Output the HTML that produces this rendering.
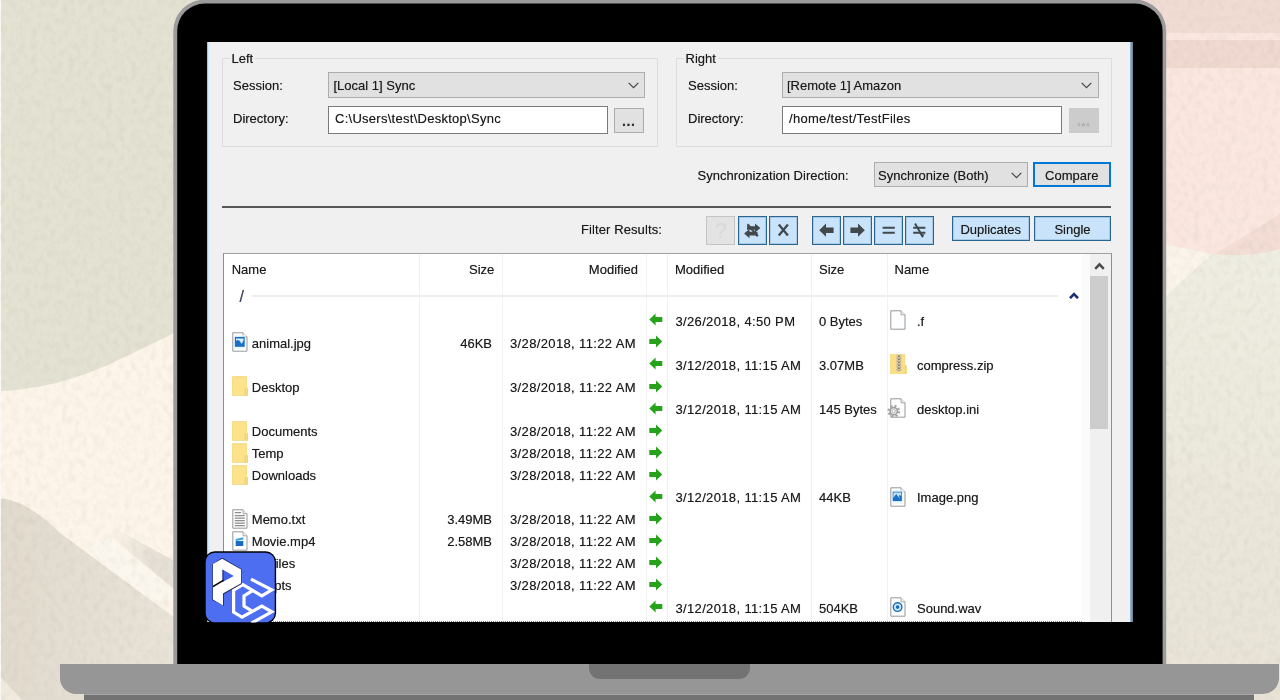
<!DOCTYPE html>
<html lang="en">
<head>
<meta charset="utf-8">
<title>Synchronize</title>
<style>
*{box-sizing:border-box;margin:0;padding:0}
html,body{width:1280px;height:700px;overflow:hidden;background:#e6e3d4}
body{position:relative;font-family:"Liberation Sans",sans-serif;font-size:13px;color:#1b1b1b}
.abs{position:absolute}
#bg{position:absolute;left:0;top:0;width:1280px;height:700px}
#base{position:absolute;left:60px;top:664px;width:1219px;height:30px;background:#969696;border-radius:0 0 16px 16px}
#notch{position:absolute;left:589px;top:664px;width:161px;height:15px;background:#747373;border-radius:0 0 11px 11px}
#foot{position:absolute;left:84px;top:694px;width:1170px;height:8px;background:#747373;border-radius:0 0 0 0;border-top:1px solid #a4a4a4}
#screen{position:absolute;left:207px;top:42px;width:926px;height:580px;background:#f0f0f0;overflow:hidden}
#in{position:absolute;left:-207px;top:-42px;width:1280px;height:700px;will-change:transform}
.t{position:absolute;white-space:pre;line-height:16px;height:16px;text-shadow:0 0 .7px rgba(20,20,20,.55)}
.r{text-align:right}
.fs{position:absolute;border:1px solid #dcdcdc}
.lg{position:absolute;background:#f0f0f0;padding:0 2px;line-height:16px;height:16px;text-shadow:0 0 .7px rgba(20,20,20,.55)}
.sel{position:absolute;background:#e1e1e1;border:1px solid #adadad}
.inp{position:absolute;background:#fff;border:1px solid #7a7a7a}
.btn{position:absolute;background:#e1e1e1;border:1px solid #adadad;text-align:center}
.tb{position:absolute;background:#c9e4fa;border:1px solid #2a668f;box-shadow:inset 0 0 0 1px rgba(60,120,170,.25)}
.tb svg{position:absolute;left:-1px;top:-1px}
.vl{position:absolute;top:254px;width:1px;height:370px;background:#f1f1f1}
svg{display:block}
.ic{position:absolute}
</style>
</head>
<body>
<svg id="bg" viewBox="0 0 1280 700">
  <defs>
    <filter id="pn" x="0" y="0" width="100%" height="100%">
      <feTurbulence type="fractalNoise" baseFrequency="0.16 0.12" numOctaves="3" seed="7" result="n"/>
      <feColorMatrix type="matrix" values="0 0 0 0 0.35  0 0 0 0 0.32  0 0 0 0 0.25  0.55 0.55 0 0 -0.47"/>
    </filter>
    <linearGradient id="gs" x1="0" y1="0" x2="1" y2="0">
      <stop offset="0" stop-color="#e6e0d6" stop-opacity="0"/><stop offset=".6" stop-color="#e6e0d6" stop-opacity="1"/>
    </linearGradient>
    <linearGradient id="gw" gradientUnits="userSpaceOnUse" x1="0" y1="0" x2="180" y2="0">
      <stop offset="0" stop-color="#e1dacd"/><stop offset="1" stop-color="#e9e3d9"/>
    </linearGradient>
    <linearGradient id="gr" x1="0" y1="0" x2="0" y2="1">
      <stop offset="0" stop-color="#efeee2"/><stop offset="1" stop-color="#e8e3d6"/>
    </linearGradient>
  </defs>
  <rect width="1280" height="700" fill="#e4e2d2"/>
  <!-- left: cream + grey wash -->
  <path d="M0,391 C40,390 80,378 114,362 S160,340 180,330 L180,700 L0,700 Z" fill="#fdf5e9"/>
  <path d="M0,498 C22,501 40,513 60,533 L163,609 L180,621 L180,700 L0,700 Z" fill="url(#gw)"/>
  <path d="M118,530 L180,564 L180,594 L110,536 Z" fill="url(#gs)"/>
  <path d="M108,536 L173,589 L163,609 L85,551 Z" fill="#fcf7ee"/>
  <path d="M0,676 L22,700 L0,700 Z" fill="#f1ebdf"/>
  <rect x="0" y="0" width="1" height="700" fill="#fbfaf6"/>
  <!-- right: pink + greenish -->
  <rect x="1100" y="240" width="180" height="460" fill="url(#gr)"/>
  <path d="M1100,0 L1280,0 L1280,249 C1265,253 1240,257 1212,254 L1167,244 L1100,232 Z" fill="#fbe7e0"/>
  <rect x="1100" y="0" width="180" height="33" fill="#f1dcd4"/>
  <rect x="1100" y="40" width="180" height="28" fill="#efd9d0"/>
  <path d="M1280,214 L1280,249 C1262,254 1240,257 1215,254 Z" fill="#f3ddd5"/>
  <path d="M1150,241 L1212,254 L1166,296 L1150,300 Z" fill="#faf4eb"/>
  <rect width="1280" height="700" filter="url(#pn)" opacity="0.3"/>
</svg>
<svg class="abs" style="left:0;top:0" width="1280" height="700" viewBox="0 0 1280 700">
  <path d="M173.3,665 V31 A31.5,31.5 0 0 1 204.8,-0.4 H1134.7 A31.5,31.5 0 0 1 1166.2,31 V665 Z" fill="#9b9b9b"/>
  <path d="M177.2,665 V31 A27.5,27.5 0 0 1 204.7,3.6 H1135 A27.5,27.5 0 0 1 1162.6,31 V665 Z" fill="#000"/>
</svg>
<div id="base"></div>
<div id="notch"></div>
<div id="foot"></div>
<div id="screen"><div id="in">
<div class="abs" style="left:207px;top:42px;width:3px;height:580px;background:linear-gradient(90deg,#7fa3bd 0,#cdeafc 35%,#d6eefd 70%,#ecf3f8 100%)"></div>
<div class="abs" style="left:1128px;top:42px;width:5px;height:580px;background:linear-gradient(90deg,#eaf4fb 0,#e1f1fd 35%,#9fc0d9 45%,#7f9db3 60%,#8099ab 85%,#59646c 100%)"></div>
<div class="fs" style="left:222px;top:58px;width:436px;height:89px"></div>
<div class="fs" style="left:676px;top:58px;width:436px;height:89px"></div>
<div class="lg" style="left:229.5px;top:50.5px">Left</div>
<div class="lg" style="left:683.5px;top:50.5px">Right</div>
<div class="t" style="left:233px;top:77.5px;">Session:</div>
<div class="t" style="left:233px;top:111.0px;">Directory:</div>
<div class="t" style="left:688px;top:77.5px;">Session:</div>
<div class="t" style="left:688px;top:111.0px;">Directory:</div>
<div class="sel" style="left:328px;top:72px;width:317px;height:25.5px"><svg class="abs" style="right:5.5px;top:9px" width="11" height="7" viewBox="0 0 11 7"><path d="M0.7,0.8 L5.5,5.6 L10.3,0.8" fill="none" stroke="#444" stroke-width="1.2"/></svg></div>
<div class="t" style="left:333.5px;top:77.5px;">[Local 1] Sync</div>
<div class="sel" style="left:782px;top:72px;width:316.5px;height:25.5px"><svg class="abs" style="right:5.5px;top:9px" width="11" height="7" viewBox="0 0 11 7"><path d="M0.7,0.8 L5.5,5.6 L10.3,0.8" fill="none" stroke="#444" stroke-width="1.2"/></svg></div>
<div class="t" style="left:787px;top:77.5px;">[Remote 1] Amazon</div>
<div class="inp" style="left:328px;top:106px;width:280px;height:28px"></div>
<div class="t" style="left:335px;top:111.0px;letter-spacing:.27px">C:\Users\test\Desktop\Sync</div>
<div class="inp" style="left:782px;top:106px;width:280px;height:28px"></div>
<div class="t" style="left:789px;top:111.0px;letter-spacing:.3px">/home/test/TestFiles</div>
<div class="btn" style="left:614px;top:108px;width:29.5px;height:25px"></div>
<div class="t" style="left:614px;top:113.0px;width:29.5px;text-align:center;letter-spacing:.6px;font-weight:bold;font-size:14px;color:#333">...</div>
<div class="btn" style="left:1069px;top:108px;width:29.5px;height:25px;background:#cccccc;border-color:#cccccc"></div>
<div class="t" style="left:1069px;top:113.0px;width:29.5px;text-align:center;letter-spacing:.6px;font-weight:bold;font-size:14px;color:#b9b9b9">...</div>
<div class="t" style="left:697.5px;top:168.0px;">Synchronization Direction:</div>
<div class="sel" style="left:874px;top:162px;width:154px;height:25px"><svg class="abs" style="right:5.5px;top:8.5px" width="11" height="7" viewBox="0 0 11 7"><path d="M0.7,0.8 L5.5,5.6 L10.3,0.8" fill="none" stroke="#444" stroke-width="1.2"/></svg></div>
<div class="t" style="left:878px;top:168.0px;">Synchronize (Both)</div>
<div class="btn" style="left:1032.5px;top:161.5px;width:78.5px;height:25.5px;border:2px solid #0078d7"></div>
<div class="t" style="left:1032.5px;top:168.0px;width:78.5px;text-align:center">Compare</div>
<div class="abs" style="left:222px;top:206px;width:889px;height:2px;background:#575757"></div>
<div class="t" style="left:581px;top:221.5px;letter-spacing:.1px">Filter Results:</div>
<div class="tb" style="left:706px;top:216px;width:29px;height:28.5px;background:#e3e3e3;border-color:#c4c4c4;box-shadow:none;"></div>
<div class="t" style="left:706px;top:223.0px;width:29px;text-align:center;color:#d9d9d9;font-size:22px;text-shadow:none;line-height:16px">?</div>
<div class="tb" style="left:738px;top:216px;width:29px;height:28.5px;"><svg width="29" height="28.5" viewBox="0 0 29 28.5"><g fill="#42494d" stroke="none"><path d="M9,10.2 L17,10.2 L17,7.4 L22.4,12 L17,16.6 L17,13.8 L9,13.8 Z"/><path d="M19.5,15.8 L11.5,15.8 L11.5,13 L6.1,17.6 L11.5,22.2 L11.5,19.4 L19.5,19.4 Z"/></g><path d="M9.5,8.2 L19.8,20.2" stroke="#42494d" stroke-width="2.2" fill="none"/></svg></div>
<div class="tb" style="left:769px;top:216px;width:29px;height:28.5px;"><svg width="29" height="28.5" viewBox="0 0 29 28.5"><path d="M9.8,8.6 L18.9,19.4 M18.9,8.6 L9.8,19.4" stroke="#42494d" stroke-width="2.3" fill="none"/></svg></div>
<div class="tb" style="left:811.7px;top:216px;width:29px;height:28.5px;"><svg width="29" height="28.5" viewBox="0 0 29 28.5"><path d="M7.2,14.2 L14,7.6 L14,11.4 L21.6,11.4 L21.6,17 L14,17 L14,20.8 Z" fill="#42494d"/></svg></div>
<div class="tb" style="left:842.5px;top:216px;width:29px;height:28.5px;"><svg width="29" height="28.5" viewBox="0 0 29 28.5"><path d="M21.8,14.2 L15,7.6 L15,11.4 L7.4,11.4 L7.4,17 L15,17 L15,20.8 Z" fill="#42494d"/></svg></div>
<div class="tb" style="left:874.3px;top:216px;width:29px;height:28.5px;"><svg width="29" height="28.5" viewBox="0 0 29 28.5"><path d="M8.6,10.7 h12.2 v2.1 h-12.2 Z M8.6,15.7 h12.2 v2.1 h-12.2 Z" fill="#42494d"/></svg></div>
<div class="tb" style="left:905.2px;top:216px;width:29px;height:28.5px;"><svg width="29" height="28.5" viewBox="0 0 29 28.5"><path d="M8.2,10.7 h12.2 v2.1 h-12.2 Z M8.2,15.7 h12.2 v2.1 h-12.2 Z" fill="#42494d"/><path d="M10,7.6 L17.5,20.4" stroke="#42494d" stroke-width="2" fill="none"/><path d="M15.2,18.2 L19.4,18.2 L17.6,22 Z" fill="#42494d"/></svg></div>
<div class="tb" style="left:951.5px;top:215.8px;width:78.5px;height:25.5px"></div>
<div class="t" style="left:951.5px;top:221.5px;width:78.5px;text-align:center">Duplicates</div>
<div class="tb" style="left:1034px;top:215.8px;width:77px;height:25.5px"></div>
<div class="t" style="left:1034px;top:221.5px;width:77px;text-align:center">Single</div>
<div class="abs" style="left:223px;top:253px;width:889px;height:380px;background:#fff;border:1px solid #8e8e8e;border-top-color:#a0a0a0"></div>
<div class="abs" style="left:1082px;top:254px;width:8px;height:370px;background:#fbfbfb"></div>
<div class="abs" style="left:1090px;top:254px;width:21px;height:370px;background:#f0f0f0"></div>
<div class="abs" style="left:1090px;top:276px;width:18px;height:153px;background:#cdcdcd"></div>
<svg class="abs" style="left:1093.5px;top:262px" width="11" height="8" viewBox="0 0 11 8"><path d="M1.2,6.8 L5.5,2.4 L9.8,6.8" fill="none" stroke="#4a4a4a" stroke-width="2.5"/></svg>
<div class="vl" style="left:418.5px"></div>
<div class="vl" style="left:501.5px"></div>
<div class="vl" style="left:645.5px"></div>
<div class="vl" style="left:667.3px"></div>
<div class="vl" style="left:811px"></div>
<div class="vl" style="left:886.5px"></div>
<div class="t" style="left:231.7px;top:261.5px;">Name</div>
<div class="t r" style="left:440px;top:261.5px;width:54.3px;">Size</div>
<div class="t r" style="left:520px;top:261.5px;width:118px;">Modified</div>
<div class="t" style="left:675px;top:261.5px;">Modified</div>
<div class="t" style="left:819px;top:261.5px;">Size</div>
<div class="t" style="left:894.5px;top:261.5px;">Name</div>
<div class="t" style="left:239.5px;top:289.2px;color:#3e4565;font-size:16px">/</div>
<div class="abs" style="left:252px;top:295px;width:806px;height:2px;background:#eeeeee"></div>
<svg class="abs" style="left:1068.5px;top:292px" width="10" height="7" viewBox="0 0 10 7"><path d="M1,6.2 L5,2.2 L9,6.2" fill="none" stroke="#1c2f72" stroke-width="2.6"/></svg>
<svg class="abs" style="left:649px;top:313.3px" width="14" height="13" viewBox="0 0 14 13"><path d="M0.3,6.5 L6.6,0.4 L6.6,4 L13.3,4 L13.3,9 L6.6,9 L6.6,12.6 Z" fill="#27a31b"/></svg>
<div class="t" style="left:675.4px;top:313.6px;letter-spacing:.36px">3/26/2018, 4:50 PM</div>
<div class="t" style="left:819px;top:313.6px;">0 Bytes</div>
<svg class="ic" style="left:890px;top:310.1px" width="16" height="20" viewBox="0 0 16 20"><path d="M0.8,0.8 H11 L15,4.8 V19.2 H0.8 Z" fill="#fdfeff" stroke="#989898"/><path d="M11,0.8 V4.8 H15" fill="#eef1f4" stroke="#a0a0a0" stroke-width=".9"/></svg>
<div class="t" style="left:917px;top:313.6px;">.f</div>
<svg class="ic" style="left:232.2px;top:332.1px" width="16" height="20" viewBox="0 0 16 20"><path d="M0.8,0.8 H11 L15,4.8 V19.2 H0.8 Z" fill="#fdfeff" stroke="#989898"/><path d="M11,0.8 V4.8 H15" fill="#eef1f4" stroke="#a0a0a0" stroke-width=".9"/><rect x="1.8" y="3" width="12" height="14" fill="#e4f3fd" opacity=".7"/><rect x="2.9" y="4.9" width="9.8" height="9.9" fill="#1a70c6"/><path d="M4,6.4 H11.6 V8.2 L9.6,12 L7.6,8.8 L5.8,8 L4,8.8 Z" fill="#dcedfb"/></svg>
<div class="t" style="left:251.8px;top:335.7px;">animal.jpg</div>
<div class="t r" style="left:430px;top:335.7px;width:62px;">46KB</div>
<div class="t" style="left:510px;top:335.7px;letter-spacing:.36px">3/28/2018, 11:22 AM</div>
<svg class="abs" style="left:649px;top:335.4px" width="14" height="13" viewBox="0 0 14 13"><path d="M13.3,6.5 L7,0.4 L7,4 L0.3,4 L0.3,9 L7,9 L7,12.6 Z" fill="#27a31b"/></svg>
<svg class="abs" style="left:649px;top:357.4px" width="14" height="13" viewBox="0 0 14 13"><path d="M0.3,6.5 L6.6,0.4 L6.6,4 L13.3,4 L13.3,9 L6.6,9 L6.6,12.6 Z" fill="#27a31b"/></svg>
<div class="t" style="left:675.4px;top:357.7px;letter-spacing:.36px">3/12/2018, 11:15 AM</div>
<div class="t" style="left:819px;top:357.7px;">3.07MB</div>
<svg class="ic" style="left:889.7px;top:353.9px" width="17" height="20" viewBox="0 0 17 20"><path d="M0.3,0.6 H14.8 V11.5 H16.4 V19.8 H0.3 Z" fill="#fbdf85" stroke="#f2d576" stroke-width=".7"/><path d="M14.9,11.6 H16.3 V19.6 H14.9 Z" fill="#f0d272"/><rect x="6.3" y="0.6" width="5.2" height="16.8" fill="#d6c8a2"/><path d="M8.9,1.6 V17" stroke="#5d584b" stroke-width="1.3" stroke-dasharray="1.4 1.6"/><path d="M7.3,3.2 V17" stroke="#b5ab8c" stroke-width="1" stroke-dasharray="1.5 1.5"/><path d="M10.5,3.2 V17" stroke="#b5ab8c" stroke-width="1" stroke-dasharray="1.5 1.5"/></svg>
<div class="t" style="left:917px;top:357.7px;">compress.zip</div>
<svg class="ic" style="left:232.2px;top:376.4px" width="16" height="20" viewBox="0 0 16 20"><path d="M0.5,0.6 H14.6 V12.2 H15.9 V19.6 H0.5 Z" fill="#fbe28b" stroke="#f3d77c" stroke-width=".8"/><path d="M13.2,12.4 V19.4" stroke="#e8cb6c" stroke-width=".9"/><path d="M14.7,12.4 H15.8 V19.4 H14.7 Z" fill="#f1d576"/></svg>
<div class="t" style="left:251.8px;top:379.8px;">Desktop</div>
<div class="t" style="left:510px;top:379.8px;letter-spacing:.36px">3/28/2018, 11:22 AM</div>
<svg class="abs" style="left:649px;top:379.5px" width="14" height="13" viewBox="0 0 14 13"><path d="M13.3,6.5 L7,0.4 L7,4 L0.3,4 L0.3,9 L7,9 L7,12.6 Z" fill="#27a31b"/></svg>
<svg class="abs" style="left:649px;top:401.6px" width="14" height="13" viewBox="0 0 14 13"><path d="M0.3,6.5 L6.6,0.4 L6.6,4 L13.3,4 L13.3,9 L6.6,9 L6.6,12.6 Z" fill="#27a31b"/></svg>
<div class="t" style="left:675.4px;top:401.9px;letter-spacing:.36px">3/12/2018, 11:15 AM</div>
<div class="t" style="left:819px;top:401.9px;">145 Bytes</div>
<svg class="ic" style="left:887.2px;top:398.4px" width="19" height="20" viewBox="0 0 19 20"><g transform="translate(3,0)"><path d="M0.8,0.8 H11 L15,4.8 V19.2 H0.8 Z" fill="#fdfeff" stroke="#989898"/><path d="M11,0.8 V4.8 H15" fill="#eef1f4" stroke="#a0a0a0" stroke-width=".9"/></g><circle cx="6.8" cy="13.2" r="5.2" fill="none" stroke="#a9a9a9" stroke-width="2.4" stroke-dasharray="2.1 1.98"/><circle cx="6.8" cy="13.2" r="3.6" fill="#ececec" stroke="#9d9d9d" stroke-width="1.5"/><circle cx="6.8" cy="13.2" r="1.7" fill="#fff" stroke="#a5a5a5" stroke-width=".8"/></svg>
<div class="t" style="left:917px;top:401.9px;">desktop.ini</div>
<svg class="ic" style="left:232.2px;top:420.6px" width="16" height="20" viewBox="0 0 16 20"><path d="M0.5,0.6 H14.6 V12.2 H15.9 V19.6 H0.5 Z" fill="#fbe28b" stroke="#f3d77c" stroke-width=".8"/><path d="M13.2,12.4 V19.4" stroke="#e8cb6c" stroke-width=".9"/><path d="M14.7,12.4 H15.8 V19.4 H14.7 Z" fill="#f1d576"/></svg>
<div class="t" style="left:251.8px;top:424.0px;">Documents</div>
<div class="t" style="left:510px;top:424.0px;letter-spacing:.36px">3/28/2018, 11:22 AM</div>
<svg class="abs" style="left:649px;top:423.7px" width="14" height="13" viewBox="0 0 14 13"><path d="M13.3,6.5 L7,0.4 L7,4 L0.3,4 L0.3,9 L7,9 L7,12.6 Z" fill="#27a31b"/></svg>
<svg class="ic" style="left:232.2px;top:442.6px" width="16" height="20" viewBox="0 0 16 20"><path d="M0.5,0.6 H14.6 V12.2 H15.9 V19.6 H0.5 Z" fill="#fbe28b" stroke="#f3d77c" stroke-width=".8"/><path d="M13.2,12.4 V19.4" stroke="#e8cb6c" stroke-width=".9"/><path d="M14.7,12.4 H15.8 V19.4 H14.7 Z" fill="#f1d576"/></svg>
<div class="t" style="left:251.8px;top:446.0px;">Temp</div>
<div class="t" style="left:510px;top:446.0px;letter-spacing:.36px">3/28/2018, 11:22 AM</div>
<svg class="abs" style="left:649px;top:445.7px" width="14" height="13" viewBox="0 0 14 13"><path d="M13.3,6.5 L7,0.4 L7,4 L0.3,4 L0.3,9 L7,9 L7,12.6 Z" fill="#27a31b"/></svg>
<svg class="ic" style="left:232.2px;top:464.7px" width="16" height="20" viewBox="0 0 16 20"><path d="M0.5,0.6 H14.6 V12.2 H15.9 V19.6 H0.5 Z" fill="#fbe28b" stroke="#f3d77c" stroke-width=".8"/><path d="M13.2,12.4 V19.4" stroke="#e8cb6c" stroke-width=".9"/><path d="M14.7,12.4 H15.8 V19.4 H14.7 Z" fill="#f1d576"/></svg>
<div class="t" style="left:251.8px;top:468.1px;">Downloads</div>
<div class="t" style="left:510px;top:468.1px;letter-spacing:.36px">3/28/2018, 11:22 AM</div>
<svg class="abs" style="left:649px;top:467.8px" width="14" height="13" viewBox="0 0 14 13"><path d="M13.3,6.5 L7,0.4 L7,4 L0.3,4 L0.3,9 L7,9 L7,12.6 Z" fill="#27a31b"/></svg>
<svg class="abs" style="left:649px;top:489.9px" width="14" height="13" viewBox="0 0 14 13"><path d="M0.3,6.5 L6.6,0.4 L6.6,4 L13.3,4 L13.3,9 L6.6,9 L6.6,12.6 Z" fill="#27a31b"/></svg>
<div class="t" style="left:675.4px;top:490.2px;letter-spacing:.36px">3/12/2018, 11:15 AM</div>
<div class="t" style="left:819px;top:490.2px;">44KB</div>
<svg class="ic" style="left:890px;top:486.7px" width="16" height="20" viewBox="0 0 16 20"><path d="M0.8,0.8 H11 L15,4.8 V19.2 H0.8 Z" fill="#fdfeff" stroke="#989898"/><path d="M11,0.8 V4.8 H15" fill="#eef1f4" stroke="#a0a0a0" stroke-width=".9"/><rect x="1.8" y="3" width="12" height="14" fill="#e4f3fd" opacity=".7"/><rect x="2.7" y="4.7" width="9.2" height="9.4" fill="#1a70c6"/><path d="M3.4,5.4 H11.2 V9.6 L9.9,7.4 L8.9,9.4 L10.4,12.4 L6.2,6.9 L3.4,11 Z" fill="#c4e6fb"/></svg>
<div class="t" style="left:917px;top:490.2px;">Image.png</div>
<svg class="ic" style="left:232.2px;top:508.6px" width="16" height="20" viewBox="0 0 16 20"><path d="M0.8,0.8 H11 L15,4.8 V19.2 H0.8 Z" fill="#fdfeff" stroke="#989898"/><path d="M11,0.8 V4.8 H15" fill="#eef1f4" stroke="#a0a0a0" stroke-width=".9"/><path d="M2.8,3.6 H9 M2.8,6.6 H12.8 M2.8,9.1 H12.8 M2.8,11.6 H12.8 M2.8,14.1 H12.8 M2.8,16.6 H12.8" stroke="#8d8d8d" stroke-width="1.1" fill="none"/></svg>
<div class="t" style="left:251.8px;top:512.2px;">Memo.txt</div>
<div class="t r" style="left:430px;top:512.2px;width:62px;">3.49MB</div>
<div class="t" style="left:510px;top:512.2px;letter-spacing:.36px">3/28/2018, 11:22 AM</div>
<svg class="abs" style="left:649px;top:511.9px" width="14" height="13" viewBox="0 0 14 13"><path d="M13.3,6.5 L7,0.4 L7,4 L0.3,4 L0.3,9 L7,9 L7,12.6 Z" fill="#27a31b"/></svg>
<svg class="ic" style="left:232.2px;top:530.7px" width="16" height="20" viewBox="0 0 16 20"><path d="M0.8,0.8 H11 L15,4.8 V19.2 H0.8 Z" fill="#fdfeff" stroke="#989898"/><path d="M11,0.8 V4.8 H15" fill="#eef1f4" stroke="#a0a0a0" stroke-width=".9"/><rect x="3.7" y="10" width="7.6" height="5" fill="#166dbf"/><path d="M3.7,8 L11.3,6.2 L11.3,8.6 L3.7,9.9 Z" fill="#3aa0e6"/></svg>
<div class="t" style="left:251.8px;top:534.3px;">Movie.mp4</div>
<div class="t r" style="left:430px;top:534.3px;width:62px;">2.58MB</div>
<div class="t" style="left:510px;top:534.3px;letter-spacing:.36px">3/28/2018, 11:22 AM</div>
<svg class="abs" style="left:649px;top:534.0px" width="14" height="13" viewBox="0 0 14 13"><path d="M13.3,6.5 L7,0.4 L7,4 L0.3,4 L0.3,9 L7,9 L7,12.6 Z" fill="#27a31b"/></svg>
<svg class="ic" style="left:232.2px;top:553.0px" width="16" height="20" viewBox="0 0 16 20"><path d="M0.5,0.6 H14.6 V12.2 H15.9 V19.6 H0.5 Z" fill="#fbe28b" stroke="#f3d77c" stroke-width=".8"/><path d="M13.2,12.4 V19.4" stroke="#e8cb6c" stroke-width=".9"/><path d="M14.7,12.4 H15.8 V19.4 H14.7 Z" fill="#f1d576"/></svg>
<div class="t" style="left:251.8px;top:556.4px;">Profiles</div>
<div class="t" style="left:510px;top:556.4px;letter-spacing:.36px">3/28/2018, 11:22 AM</div>
<svg class="abs" style="left:649px;top:556.1px" width="14" height="13" viewBox="0 0 14 13"><path d="M13.3,6.5 L7,0.4 L7,4 L0.3,4 L0.3,9 L7,9 L7,12.6 Z" fill="#27a31b"/></svg>
<svg class="ic" style="left:232.2px;top:575.0px" width="16" height="20" viewBox="0 0 16 20"><path d="M0.5,0.6 H14.6 V12.2 H15.9 V19.6 H0.5 Z" fill="#fbe28b" stroke="#f3d77c" stroke-width=".8"/><path d="M13.2,12.4 V19.4" stroke="#e8cb6c" stroke-width=".9"/><path d="M14.7,12.4 H15.8 V19.4 H14.7 Z" fill="#f1d576"/></svg>
<div class="t" style="left:251.8px;top:578.4px;">Scripts</div>
<div class="t" style="left:510px;top:578.4px;letter-spacing:.36px">3/28/2018, 11:22 AM</div>
<svg class="abs" style="left:649px;top:578.1px" width="14" height="13" viewBox="0 0 14 13"><path d="M13.3,6.5 L7,0.4 L7,4 L0.3,4 L0.3,9 L7,9 L7,12.6 Z" fill="#27a31b"/></svg>
<svg class="abs" style="left:649px;top:600.2px" width="14" height="13" viewBox="0 0 14 13"><path d="M0.3,6.5 L6.6,0.4 L6.6,4 L13.3,4 L13.3,9 L6.6,9 L6.6,12.6 Z" fill="#27a31b"/></svg>
<div class="t" style="left:675.4px;top:600.5px;letter-spacing:.36px">3/12/2018, 11:15 AM</div>
<div class="t" style="left:819px;top:600.5px;">504KB</div>
<svg class="ic" style="left:890px;top:597.0px" width="16" height="20" viewBox="0 0 16 20"><path d="M0.8,0.8 H11 L15,4.8 V19.2 H0.8 Z" fill="#fdfeff" stroke="#989898"/><path d="M11,0.8 V4.8 H15" fill="#eef1f4" stroke="#a0a0a0" stroke-width=".9"/><circle cx="7.6" cy="10.1" r="4.3" fill="#c3e7fd" stroke="#226fae" stroke-width="1.4"/><circle cx="7.6" cy="10.1" r="1.8" fill="#1a66b4"/></svg>
<div class="t" style="left:917px;top:600.5px;">Sound.wav</div>
<div class="abs" style="left:224px;top:620.5px;width:858px;height:1px;border-top:1px dotted #6b8db5"></div>
</div></div>
<svg class="abs" style="left:200px;top:548px" width="80" height="80" viewBox="0 0 700 700">
  <defs><clipPath id="lc"><rect x="47" y="38" width="610" height="614" rx="80" ry="80"/></clipPath></defs>
  <rect x="38" y="29" width="628" height="632" rx="92" ry="92" fill="#000"/>
  <rect x="50" y="41" width="604" height="608" rx="80" ry="80" fill="#4e6ef2"/>
  <g clip-path="url(#lc)">
    <!-- C glyph drawn as outlined strokes -->
    <path d="M446,272 L628,366 L541,418 L375,320 L294,369 L294,561 L368,606 L541,509 L628,558 L450,658 M460,372 L385,418 L385,509 L460,554" fill="none" stroke="#fff" stroke-width="28" stroke-linejoin="miter" stroke-linecap="butt"/>
    <!-- P glyph -->
    <path d="M108,142 L194,86 L366,186 L366,314 L208,404 L208,508 L108,455 Z" fill="#0a0f2a" opacity=".8"/>
    <path d="M113,139 L194,93 L360,188 L360,308 L201,399 L201,503 L113,451 Z" fill="#fff"/>
    <path d="M197,189 L296,246 L197,297 Z" fill="#4464e6"/>
    <path d="M197,189 L206,194 L206,292 L197,297 Z" fill="#1b2a78"/>
    <path d="M113,330 L204,276 L204,291 L113,345 Z" fill="#000"/>
  </g>
</svg>
</body>
</html>
